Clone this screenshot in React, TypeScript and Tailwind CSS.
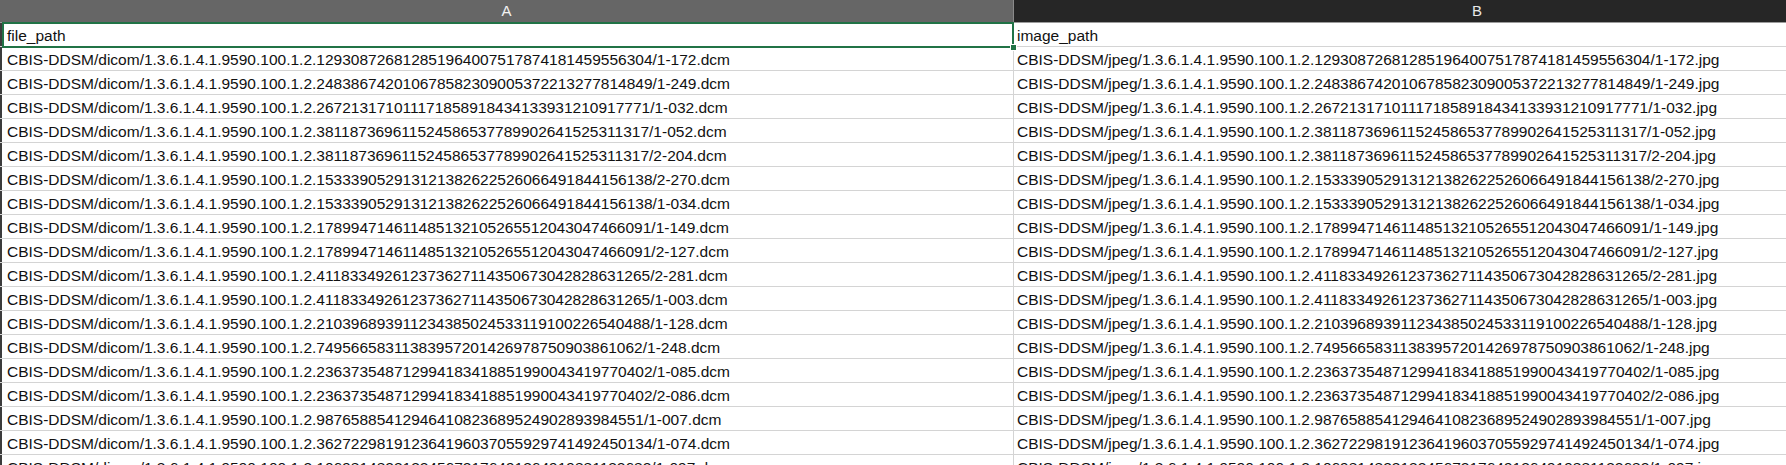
const ids: [string, string][] = [
  ["129308726812851964007517874181459556304", "1-172"],
  ["248386742010678582309005372213277814849", "1-249"],
  ["267213171011171858918434133931210917771", "1-032"],
  ["381187369611524586537789902641525311317", "1-052"],
  ["381187369611524586537789902641525311317", "2-204"],
  ["153339052913121382622526066491844156138", "2-270"],
  ["153339052913121382622526066491844156138", "1-034"],
  ["178994714611485132105265512043047466091", "1-149"],
  ["178994714611485132105265512043047466091", "2-127"],
  ["411833492612373627114350673042828631265", "2-281"],
  ["411833492612373627114350673042828631265", "1-003"],
  ["210396893911234385024533119100226540488", "1-128"],
  ["74956658311383957201426978750903861062", "1-248"],
  ["236373548712994183418851990043419770402", "1-085"],
  ["236373548712994183418851990043419770402", "2-086"],
  ["98765885412946410823689524902893984551", "1-007"],
  ["362722981912364196037055929741492450134", "1-074"],
  ["106981482313245672176491364919881132682", "1-097"],
];

const prefix = "1.3.6.1.4.1.9590.100.1.2.";

function Row({ a, b }: { a: string; b: string }) {
  return (
    <div className="flex h-[24px] border-b border-[#d4d4d4]">
      <div className="w-[2px] shrink-0 bg-[#3c3c3c]" />
      <div className="w-[1012px] shrink-0 border-r border-[#d4d4d4] flex items-center pl-[5px] pt-[3px] whitespace-nowrap overflow-hidden">
        {a}
      </div>
      <div className="flex-1 flex items-center pl-[3px] pt-[3px] whitespace-nowrap overflow-hidden">
        {b}
      </div>
    </div>
  );
}

export default function App() {
  return (
    <div
      className="w-[1786px] h-[465px] overflow-hidden bg-white text-[#111111] text-[15.5px] leading-[18px]"
      style={{ fontFamily: '"Liberation Sans", Arial, sans-serif' }}
    >
      {/* Column headers */}
      <div className="flex h-[23px] border-b border-[#9c9c9c]">
        <div className="w-[1014px] shrink-0 bg-[#666666] border-r border-[#8a8a8a] flex items-center justify-center text-[#f2f2f2] text-[15px]">
          A
        </div>
        <div className="flex-1 bg-[#262626] flex items-center text-[#e8e8e8] text-[15px]">
          <span className="ml-[458px]">B</span>
        </div>
      </div>

      {/* Selected first row */}
      <div className="relative">
        <Row a="file_path" b="image_path" />
        <div className="absolute left-[2px] top-[-1px] w-[1012px] h-[26px] border-2 border-[#217346]" />
        <div className="absolute left-[1010px] top-[21px] w-[7px] h-[7px] bg-[#217346] border border-white" />
      </div>

      {ids.map(([id, file], i) => (
        <Row
          key={i}
          a={`CBIS-DDSM/dicom/${prefix}${id}/${file}.dcm`}
          b={`CBIS-DDSM/jpeg/${prefix}${id}/${file}.jpg`}
        />
      ))}
    </div>
  );
}
